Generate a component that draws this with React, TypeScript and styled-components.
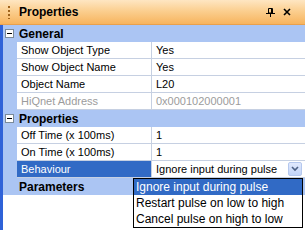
import * as React from "react";
import styled, { createGlobalStyle } from "styled-components";

const GlobalStyle = createGlobalStyle`
  html, body {
    margin: 0;
    padding: 0;
    background: #ffffff;
  }
  body {
    font-family: "Liberation Sans", Arial, sans-serif;
    font-size: 11px;
    color: #000000;
  }
`;

const Panel = styled.div`
  position: relative;
  width: 305px;
  height: 230px;
  display: flex;
  flex-direction: column;
  background: #ffffff;
  overflow: hidden;
`;

const TitleBar = styled.div`
  height: 25px;
  box-sizing: border-box;
  display: flex;
  align-items: center;
  padding: 0 11px 0 5px;
  background: linear-gradient(to bottom, #fee6c2 0%, #fbcf90 45%, #f7b45e 100%);
  border-bottom: 1px solid #e8a04c;
`;

const Grip = styled.div`
  width: 2px;
  height: 13px;
  margin: 0 9px 0 3px;
  background: repeating-linear-gradient(
    to bottom,
    #a0641c 0px,
    #a0641c 2px,
    transparent 2px,
    transparent 4px
  );
`;

const Title = styled.span`
  flex: 1;
  font-weight: bold;
  font-size: 12px;
`;

const TitleButton = styled.span`
  display: flex;
  align-items: center;
  justify-content: center;
  width: 14px;
  height: 14px;
  margin-left: 3px;
`;

const Grid = styled.div`
  flex: 1;
  border-left: 3px solid #2f62d8;
  display: flex;
  flex-direction: column;
`;

const CategoryRow = styled.div`
  height: 17px;
  box-sizing: border-box;
  display: flex;
  align-items: center;
  background: #abc5f3;
`;

const Expander = styled.span<{ $visible: boolean }>`
  width: 9px;
  height: 9px;
  box-sizing: border-box;
  margin: 0 5px 0 2px;
  border: 1px solid ${(p) => (p.$visible ? "#7a8a99" : "transparent")};
  background: ${(p) => (p.$visible ? "#ffffff" : "transparent")};
  display: flex;
  align-items: center;
  justify-content: center;
  &::after {
    content: "";
    width: 5px;
    height: 1px;
    background: ${(p) => (p.$visible ? "#000000" : "transparent")};
  }
`;

const CategoryName = styled.span`
  font-weight: bold;
  font-size: 12px;
`;

const PropRow = styled.div`
  height: 17px;
  display: grid;
  grid-template-columns: 14px 135px 1fr;
  background: #abc5f3;
`;

const Cell = styled.div<{ $selected?: boolean; $disabled?: boolean; $value?: boolean }>`
  position: relative;
  box-sizing: border-box;
  display: flex;
  align-items: center;
  padding-left: 4px;
  white-space: nowrap;
  overflow: hidden;
  border-bottom: 1px solid #c6d0e2;
  border-right: ${(p) => (p.$value ? "none" : "1px solid #c6d0e2")};
  background: ${(p) => (p.$selected ? "#316ac5" : "#ffffff")};
  color: ${(p) => (p.$selected ? "#ffffff" : p.$disabled ? "#9c9c9c" : "#000000")};
`;

const ComboButton = styled.span`
  position: absolute;
  right: 3px;
  top: 1px;
  width: 14px;
  height: 14px;
  box-sizing: border-box;
  border: 1px solid #b5c8ee;
  border-radius: 2px;
  background: linear-gradient(to bottom, #e0e9fd, #c2d4f8);
  display: flex;
  align-items: center;
  justify-content: center;
`;

const Dropdown = styled.div`
  position: absolute;
  left: 133px;
  top: 178px;
  width: 170px;
  box-sizing: border-box;
  border: 1px solid #000000;
  background: #ffffff;
`;

const DropItem = styled.div<{ $active?: boolean }>`
  height: 16px;
  display: flex;
  align-items: center;
  padding-left: 2px;
  font-size: 12px;
  background: ${(p) => (p.$active ? "#316ac5" : "#ffffff")};
  color: ${(p) => (p.$active ? "#ffffff" : "#000000")};
`;

type Prop = { name: string; value: string; disabled?: boolean; selected?: boolean; combo?: boolean };

const general: Prop[] = [
  { name: "Show Object Type", value: "Yes" },
  { name: "Show Object Name", value: "Yes" },
  { name: "Object Name", value: "L20" },
  { name: "HiQnet Address", value: "0x000102000001", disabled: true },
];

const properties: Prop[] = [
  { name: "Off Time (x 100ms)", value: "1" },
  { name: "On Time (x 100ms)", value: "1" },
  { name: "Behaviour", value: "Ignore input during pulse", selected: true, combo: true },
];

const options = [
  "Ignore input during pulse",
  "Restart pulse on low to high",
  "Cancel pulse on high to low",
];

const Row: React.FC<{ p: Prop }> = ({ p }) => (
  <PropRow>
    <span />
    <Cell $selected={p.selected} $disabled={p.disabled}>
      {p.name}
    </Cell>
    <Cell $value $disabled={p.disabled}>
      {p.value}
      {p.combo && (
        <ComboButton>
          <svg width="8" height="6" viewBox="0 0 8 6">
            <path d="M1 1 L4 4 L7 1" fill="none" stroke="#4d6185" strokeWidth="1.6" />
          </svg>
        </ComboButton>
      )}
    </Cell>
  </PropRow>
);

export default function App() {
  return (
    <>
      <GlobalStyle />
      <Panel>
        <TitleBar>
          <Grip />
          <Title>Properties</Title>
          <TitleButton>
            <svg width="9" height="9" viewBox="0 0 9 9">
              <path d="M2.5 0.5 H6.5 V5 H2.5 Z" fill="none" stroke="#000" />
              <path d="M5.5 0.5 V5" stroke="#000" />
              <path d="M0 5.5 H9" stroke="#000" />
              <path d="M4.5 5.5 V9" stroke="#000" />
            </svg>
          </TitleButton>
          <TitleButton>
            <svg width="8" height="8" viewBox="0 0 8 8">
              <path d="M1 1 L7 7 M7 1 L1 7" stroke="#000" strokeWidth="1.6" />
            </svg>
          </TitleButton>
        </TitleBar>
        <Grid>
          <CategoryRow>
            <Expander $visible />
            <CategoryName>General</CategoryName>
          </CategoryRow>
          {general.map((p) => (
            <Row key={p.name} p={p} />
          ))}
          <CategoryRow>
            <Expander $visible />
            <CategoryName>Properties</CategoryName>
          </CategoryRow>
          {properties.map((p) => (
            <Row key={p.name} p={p} />
          ))}
          <CategoryRow>
            <Expander $visible={false} />
            <CategoryName>Parameters</CategoryName>
          </CategoryRow>
        </Grid>
        <Dropdown>
          {options.map((o, i) => (
            <DropItem key={o} $active={i === 0}>
              {o}
            </DropItem>
          ))}
        </Dropdown>
      </Panel>
    </>
  );
}
